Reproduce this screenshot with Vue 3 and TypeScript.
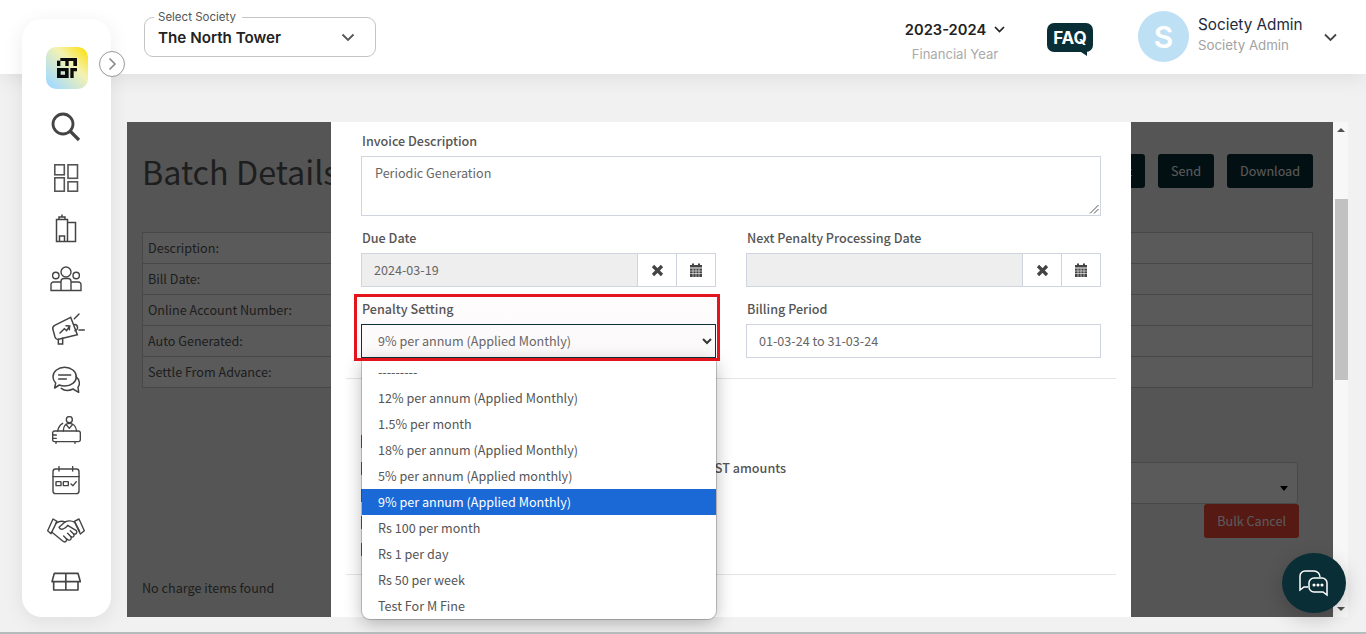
<script setup lang="ts">
const rows = ['Description:', 'Bill Date:', 'Online Account Number:', 'Auto Generated:', 'Settle From Advance:']
const options = [
  '---------',
  '12% per annum (Applied Monthly)',
  '1.5% per month',
  '18% per annum (Applied Monthly)',
  '5% per annum (Applied monthly)',
  '9% per annum (Applied Monthly)',
  'Rs 100 per month',
  'Rs 1 per day',
  'Rs 50 per week',
  'Test For M Fine'
]
const selected = '9% per annum (Applied Monthly)'
</script>

<template>
  <div class="page">
    <header class="topbar">
      <div class="society">
        <span class="society-legend">Select Society</span>
        <span class="society-name">The North Tower</span>
        <svg class="society-chev" width="14" height="9" viewBox="0 0 14 9"><path d="M1.500 1.500 7 7l5.500-5.500" fill="none" stroke="#555" stroke-width="1.800"/></svg>
      </div>
      <div class="year">
        <div class="year-line">
          <span class="year-text">2023-2024</span>
          <svg width="11" height="7" viewBox="0 0 11 7"><path d="M1 1l4.500 4.500L10 1" fill="none" stroke="#222" stroke-width="1.700"/></svg>
        </div>
        <div class="year-label">Financial Year</div>
      </div>
      <div class="faq">
        <span class="faq-text">FAQ</span>
        <svg class="faq-tail" width="9" height="6" viewBox="0 0 9 6"><path d="M0 0h9v6z" fill="#0a2e36"/></svg>
      </div>
      <div class="avatar">S</div>
      <div class="user">
        <div class="user-name">Society Admin</div>
        <div class="user-role">Society Admin</div>
      </div>
      <svg class="user-chev" width="13" height="9" viewBox="0 0 13 9"><path d="M1 1.500l5.500 5.500L12 1.500" fill="none" stroke="#444" stroke-width="1.800"/></svg>
    </header>

    <aside class="sidebar">
      <div class="logo">
        <svg width="20" height="20" viewBox="170 175 60 60" fill="#0c0c0c">
          <rect x="180" y="175" width="50" height="9"/>
          <rect x="170" y="183" width="10" height="16"/>
          <rect x="195" y="183" width="10" height="16"/>
          <rect x="219" y="183" width="11" height="16"/>
          <path fill-rule="evenodd" d="M170 205h35v30h-35zM181 215v10h13v-10z"/>
          <path d="M210 205h20v10h-10v20h-10z"/>
        </svg>
      </div>
      <div class="nav-list">
        <div class="slot">
          <svg class="shift-left" width="30" height="30" viewBox="0 0 30 30" fill="none" stroke="#444">
            <circle cx="12" cy="12" r="10" stroke-width="2.800"/>
            <path d="M19.500 19.500l8.500 8.500" stroke-width="3.200"/>
          </svg>
        </div>
        <div class="slot">
          <svg class="shift-left-1" width="26" height="29" viewBox="0 0 26 29" fill="none" stroke="#555" stroke-width="1.600">
            <rect x="1.800" y="1.800" width="9.500" height="10"/>
            <rect x="15" y="1.800" width="9.500" height="13.500"/>
            <rect x="1.800" y="14.800" width="9.500" height="13.400"/>
            <rect x="15" y="18.800" width="9.500" height="9.400"/>
          </svg>
        </div>
        <div class="slot">
          <svg class="shift-left" width="22" height="29" viewBox="0 0 22 29" fill="none" stroke="#444" stroke-width="1.500">
            <path d="M1.500 27.500V5.500h11v22zM12.500 8.500h8v19H1.500"/>
            <path d="M4 5.500V3h6v2.500M7 3V.5M4.500 27.500v-5.500h5v5.500"/>
          </svg>
        </div>
        <div class="slot">
          <svg class="shift-left-1" width="32" height="26" viewBox="0 0 32 26" fill="none" stroke="#444" stroke-width="1.400">
            <circle cx="16" cy="6" r="5"/>
            <circle cx="5.800" cy="9.500" r="3.200"/>
            <circle cx="26.200" cy="9.500" r="3.200"/>
            <path d="M1 24.500v-6a2.500 2.500 0 0 1 2.500-2.500h7.500v8.500zM11 24.500v-9a3 3 0 0 1 3-3h4a3 3 0 0 1 3 3v9zM21 16h7.500a2.500 2.500 0 0 1 2.500 2.500v6H1"/>
          </svg>
        </div>
        <div class="slot">
          <svg class="shift-right" width="36" height="32" viewBox="60 25 108 96" fill="none" stroke="#444" stroke-width="4.500" stroke-linecap="round">
            <path d="M122 38L74 62q-8 5-5 13l6 22q3 9 11 7l56-14z"/>
            <path d="M85 104v14h13v-18"/>
            <path d="M90 85l13-13 7 6 8-13M108 63l11 1-1 11"/>
            <path d="M132 60a9 9 0 0 1 3 18M133 42l14-14M147 76h16"/>
          </svg>
        </div>
        <div class="slot">
          <svg class="shift-left-1" width="28" height="27" viewBox="62 183 84 81" fill="none" stroke="#444" stroke-width="4.500" stroke-linecap="round" stroke-linejoin="round">
            <path d="M100 187c19 0 35 12 35 28s-16 28-35 28c-6 0-11-1-16-3l-14 9 3-15c-5-5-8-12-8-19 0-16 16-28 35-28z"/>
            <path d="M82 210h36M82 222h23"/>
            <path d="M134 215c11 9 13 24 6 31l2 16-17-10c-14 7-27 5-35-2"/>
          </svg>
        </div>
        <div class="slot">
          <svg class="shift-left-1" width="29" height="28" viewBox="63 333 87 84" fill="none" stroke="#444" stroke-width="4.200" stroke-linecap="round" stroke-linejoin="round">
            <circle cx="115" cy="344" r="9"/>
            <path d="M97 378c0-15 8-23 18-23s20 8 22 23M105 358l10 12 10-12M80 378c2-13 10-20 15-23"/>
            <rect x="65" y="378" width="83" height="32" rx="6"/>
            <path d="M65 390h11M65 400h11M75 410v5M132 410v5"/>
          </svg>
        </div>
        <div class="slot">
          <svg class="shift-left-1" width="28" height="29" viewBox="63 33 84 87" fill="none" stroke="#444" stroke-width="4.200" stroke-linecap="round" stroke-linejoin="round">
            <rect x="66" y="42" width="78" height="74" rx="8"/>
            <path d="M66 65h78M84 35v13M125 35v13"/>
            <rect x="75" y="80" width="15" height="12" rx="1.500"/>
            <rect x="97" y="80" width="15" height="12" rx="1.500"/>
            <path d="M120 87l6 5 10-12"/>
          </svg>
        </div>
        <div class="slot">
          <svg class="shift-left-1" width="38" height="26" viewBox="50 190 114 78" fill="none" stroke="#444" stroke-width="4.200" stroke-linecap="round" stroke-linejoin="round">
            <path d="M52 228l16-35 12 7-18 37zM162 228l-16-35-14 7 18 38z"/>
            <path d="M64 232l34 28c6 5 14-2 10-8l6 4c6 2 11-4 8-10 6 4 12-2 8-8 7 2 12-5 8-10l-26-16c-8 12-22 16-26 6l18-16c8-4 20-4 30 1l14 27"/>
            <path d="M104 202c-9-4-19-2-28 4M108 252l-8-8M122 246l-10-10M130 238l-10-10"/>
          </svg>
        </div>
        <div class="slot">
          <svg class="shift-left-1" width="30" height="20" viewBox="62 347 90 58" fill="none" stroke="#444" stroke-width="4.800" stroke-linejoin="round">
            <path d="M65 375l7-25h71l7 25zM70 375v25h73v-25M106.500 350v50"/>
          </svg>
        </div>
      </div>
      <button class="collapse" type="button" aria-label="Expand">
        <svg width="9" height="14" viewBox="0 0 9 14"><path d="M1.500 1.500 7 7l-5.500 5.500" fill="none" stroke="#888" stroke-width="1.600"/></svg>
      </button>
    </aside>

    <main class="content">
      <section class="panel">
        <div class="batch">
          <div class="batch-head">
            <h1 class="batch-title">Batch Details</h1>
            <div class="batch-actions">
              <button class="btn" type="button">Edit</button>
              <button class="btn" type="button">Send</button>
              <button class="btn" type="button">Download</button>
            </div>
          </div>
          <div class="batch-table">
            <div v-for="r in rows" :key="r" class="batch-row">{{ r }}</div>
          </div>
          <div class="batch-select"><i class="caret"></i></div>
          <div class="cancel-line"><button class="btn btn-red" type="button">Bulk Cancel</button></div>
          <p class="no-items">No charge items found</p>
        </div>

        <div class="backdrop"></div>

        <div class="modal">
          <div class="field-full">
            <label class="lab">Invoice Description</label>
            <div class="textarea">Periodic Generation
              <svg class="grip" width="10" height="10" viewBox="0 0 10 10"><path d="M9.500 1 1 9.500M9.500 5 5 9.500" stroke="#555" stroke-width="1"/></svg>
            </div>
          </div>
          <div class="grid">
            <div>
              <label class="lab">Due Date</label>
              <div class="group">
                <div class="input disabled">2024-03-19</div>
                <span class="addon"><svg width="13" height="13" viewBox="0 0 13 13"><path d="M2 2l9 9M11 2l-9 9" stroke="#444" stroke-width="3.200"/></svg></span>
                <span class="addon"><svg width="14" height="14" viewBox="0 0 14 14"><path d="M1 2h12v2.500H1zM3 .5h2V2H3zM9 .5h2V2H9z" fill="#444"/><path d="M1 5.500h12V14H1z" fill="#444"/><path d="M1 8h12M1 10.500h12M4 5.500V14M7 5.500V14M10 5.500V14" stroke="#fff" stroke-width=".6"/></svg></span>
              </div>
            </div>
            <div>
              <label class="lab">Next Penalty Processing Date</label>
              <div class="group">
                <div class="input disabled"></div>
                <span class="addon"><svg width="13" height="13" viewBox="0 0 13 13"><path d="M2 2l9 9M11 2l-9 9" stroke="#444" stroke-width="3.200"/></svg></span>
                <span class="addon"><svg width="14" height="14" viewBox="0 0 14 14"><path d="M1 2h12v2.500H1zM3 .5h2V2H3zM9 .5h2V2H9z" fill="#444"/><path d="M1 5.500h12V14H1z" fill="#444"/><path d="M1 8h12M1 10.500h12M4 5.500V14M7 5.500V14M10 5.500V14" stroke="#fff" stroke-width=".6"/></svg></span>
              </div>
            </div>
            <div class="penalty">
              <label class="lab">Penalty Setting</label>
              <div class="select">
                {{ selected }}
                <svg class="select-chev" width="10" height="7" viewBox="0 0 10 7"><path d="M1 1l4 4 4-4" fill="none" stroke="#333" stroke-width="2"/></svg>
              </div>
              <div class="highlight"></div>
              <ul class="menu">
                <li v-for="o in options" :key="o" :class="{ active: o === selected }">{{ o }}</li>
              </ul>
            </div>
            <div>
              <label class="lab">Billing Period</label>
              <div class="input">01-03-24 to 31-03-24</div>
            </div>
          </div>
          <hr class="rule" />
          <div class="checks">
            <div class="check-row"><i class="box"></i></div>
            <div class="check-row"><i class="box"></i><span class="check-label">GST amounts</span></div>
            <div class="check-row"><i class="box"></i></div>
            <div class="check-row"><i class="box"></i></div>
            <div class="check-row"><i class="box"></i></div>
          </div>
          <hr class="rule rule-low" />
        </div>
      </section>
      <div class="scrollbar">
        <i class="arrow-up"></i>
        <div class="thumb"></div>
        <i class="arrow-down"></i>
      </div>
    </main>

    <button class="chat" type="button" aria-label="Chat">
      <svg width="30" height="28" viewBox="0 0 30 28" fill="none" stroke="#fff" stroke-width="1.500">
        <path d="M9 18H5l-4 3V7a5 5 0 0 1 5-5h9a6 6 0 0 1 6 6"/>
        <path d="M15 9h8a5 5 0 0 1 5 5v12l-4-3h-9a5 5 0 0 1-5-5v-4a5 5 0 0 1 5-5z"/>
        <circle cx="15" cy="16" r=".8" fill="#fff"/><circle cx="19" cy="16" r=".8" fill="#fff"/><circle cx="23" cy="16" r=".8" fill="#fff"/>
      </svg>
    </button>
  </div>
</template>

<style>
html, body { margin: 0; padding: 0; }
</style>

<style scoped>
* { box-sizing: border-box; }
.page {
  position: relative;
  width: 1366px;
  height: 634px;
  overflow: hidden;
  background: #f1f1f1;
  border-bottom: 2px solid #b4bcbc;
  font-family: "Noto Sans CJK SC", "Noto Sans", sans-serif;
}
.topbar {
  height: 74px;
  background: #fff;
  box-shadow: 0 4px 20px rgba(0, 0, 0, .08);
  display: flex;
  align-items: flex-start;
  padding-left: 144px;
  font-family: Inter, "Liberation Sans", sans-serif;
  position: relative;
}
.society {
  position: relative;
  margin-top: 17px;
  width: 232px;
  height: 40px;
  border: 1px solid #c4c4c4;
  border-radius: 9px;
  display: flex;
  align-items: center;
  padding: 0 13px;
}
.society-legend {
  position: absolute;
  left: 9px;
  top: -7px;
  padding: 0 6px 0 4px;
  background: #fff;
  font-size: 11.500px;
  line-height: 13px;
  color: #555;
}
.society-name { font-size: 15.200px; font-weight: 600; color: #222; }
.society-chev { margin-left: auto; margin-right: 7px; }
.year { margin-left: 524px; margin-top: 20px; width: 110px; text-align: center; }
.year-line { display: flex; align-items: center; justify-content: center; gap: 8px; height: 19px; }
.year-text { font-size: 14.700px; font-weight: 600; color: #222; }
.year-label { margin-top: 7px; font-size: 13.100px; color: #aaa; }
.faq {
  position: relative;
  margin-left: 37px;
  margin-top: 23px;
  width: 46px;
  height: 29px;
  background: #0a2e36;
  border-radius: 7px;
  display: flex;
  align-items: center;
  justify-content: center;
}
.faq-text { color: #fff; font-size: 17px; font-weight: 700; }
.faq-tail { position: absolute; right: 6px; bottom: -4px; }
.avatar {
  margin-left: 45px;
  margin-top: 11px;
  width: 51px;
  height: 51px;
  border-radius: 50%;
  background: #bde0f5;
  color: #fff;
  font-size: 30px;
  font-weight: 600;
  display: flex;
  align-items: center;
  justify-content: center;
}
.user { margin-left: 9px; margin-top: 15px; width: 126px; }
.user-name { font-size: 15.300px; color: #1e2a3c; line-height: 19px; }
.user-role { font-size: 13.300px; color: #a2a2a2; line-height: 18px; margin-top: 2px; }
.user-chev { margin-top: 33px; }

.sidebar {
  position: absolute;
  left: 22px;
  top: 19px;
  width: 89px;
  height: 598px;
  background: #fff;
  border-radius: 20px;
  box-shadow: 0 4px 20px rgba(0, 0, 0, .08);
  display: flex;
  flex-direction: column;
  align-items: center;
  padding-top: 28px;
  z-index: 3;
}
.logo {
  width: 42px;
  height: 42px;
  border-radius: 10px;
  background: linear-gradient(45deg, #a8dcfb 12%, #f4f2b0 62%, #fbe012 95%);
  display: flex;
  align-items: center;
  justify-content: center;
}
.nav-list { margin-top: 13px; display: flex; flex-direction: column; width: 100%; }
.slot { height: 50.500px; display: flex; align-items: center; justify-content: center; }
.shift-left { margin-right: 2px; }
.shift-left-1 { margin-right: 1px; }
.shift-right { margin-left: 3px; }
.collapse {
  position: absolute;
  left: 77px;
  top: 32px;
  width: 26px;
  height: 26px;
  border: 1px solid #999;
  border-radius: 50%;
  background: #fff;
  display: flex;
  align-items: center;
  justify-content: center;
  padding: 0;
}

.content { margin-left: 127px; margin-top: 48px; display: flex; width: 1221px; height: 495px; }
.panel { position: relative; width: 1206px; height: 495px; background: #f1f1f1; }
.batch { padding: 0 20px 0 15px; height: 100%; display: flex; flex-direction: column; color: #555; overflow: hidden; }
.batch-head { display: flex; justify-content: space-between; align-items: flex-start; height: 110px; padding-top: 32px; flex: none; }
.batch-title { margin: 0; font-size: 32.300px; font-weight: 400; color: #555; line-height: 34px; }
.batch-actions { display: flex; gap: 13px; }
.btn {
  border: 0;
  border-radius: 3px;
  height: 34px;
  padding: 0 13px 2px;
  background: #0a2e36;
  color: #fff;
  font: 12.600px "Noto Sans CJK SC", "Noto Sans", sans-serif;
}
.btn-red { background: #f34938; }
.batch-table { border: 1px solid #ccc; border-bottom: 0; background: #fff; flex: none; }
.batch-row {
  height: 31px;
  padding-left: 5px;
  border-bottom: 1px solid #ccc;
  font-size: 12.600px;
  line-height: 30px;
}
.batch-select {
  position: relative;
  flex: none;
  margin-top: 74px;
  margin-left: 700px;
  height: 42px;
  border: 1px solid #ccc;
  border-radius: 4px;
  margin-right: 15px;
  background: #fff;
}
.caret {
  position: absolute;
  right: 9px;
  top: 23px;
  border: 4px solid transparent;
  border-top: 5px solid #000;
  border-bottom: 0;
}
.cancel-line { display: flex; justify-content: flex-end; margin-right: 14px; flex: none; }
.no-items { margin: 40px 0 0; font-size: 12.600px; line-height: 20px; }
.backdrop { position: absolute; inset: 0; background: rgba(0, 0, 0, .647); }

.modal {
  position: absolute;
  left: 204px;
  top: 0;
  width: 800px;
  height: 495px;
  background: #fff;
  padding: 10px 30px 0;
  color: #555;
  font-size: 12.600px;
}
.lab { display: block; font-size: 12.600px; font-weight: 500; color: #555; line-height: 18px; margin-bottom: 6px; padding-left: 1px; }
.textarea {
  position: relative;
  height: 60px;
  border: 1px solid #d0d4e0;
  padding: 7px 13px;
  line-height: 18px;
  color: #666;
  font-size: 12.600px;
}
.grip { position: absolute; right: 1px; bottom: 1px; }
.grid { display: grid; grid-template-columns: 355px 355px; column-gap: 30px; row-gap: 13px; margin-top: 13px; }
.group { display: flex; height: 34px; }
.input {
  flex: 1;
  height: 34px;
  border: 1px solid #d0d4e0;
  padding: 0 12px;
  line-height: 32px;
  font-size: 12.600px;
  color: #666;
}
.disabled { background: #eee; }
.addon {
  width: 39px;
  height: 34px;
  border: 1px solid #d0d4e0;
  border-left: 0;
  display: flex;
  align-items: center;
  justify-content: center;
}
.penalty { position: relative; }
.select {
  position: relative;
  height: 34px;
  border: 1px solid #0a2e36;
  padding-left: 16px;
  line-height: 32px;
  font-size: 12.600px;
  color: #666;
}
.select-chev { position: absolute; right: 3px; top: 13px; }
.highlight {
  position: absolute;
  left: -7px;
  right: -4px;
  top: -6px;
  bottom: -3px;
  border: 3px solid #e3141c;
  pointer-events: none;
  background: linear-gradient(rgba(200, 100, 120, .02), rgba(160, 100, 120, .04));
  z-index: 4;
}
.menu {
  position: absolute;
  left: 1px;
  top: 59px;
  width: 354px;
  height: 260px;
  margin: 0;
  padding: 0;
  list-style: none;
  background: #fff;
  border-radius: 0 0 8px 8px;
  box-shadow: 0 0 0 1px rgba(0, 0, 0, .2), 0 4px 18px rgba(0, 0, 0, .28);
  overflow: hidden;
  z-index: 3;
}
.menu li { height: 26px; line-height: 25px; padding-left: 16px; font-size: 12.600px; color: #555; }
.menu li.active { background: #1a69d6; color: #fff; }
.rule { border: 0; border-top: 1px solid #e5e5e5; margin: 20px -15px 0; }
.checks { padding-top: 49px; }
.check-row { display: flex; align-items: center; height: 27px; }
.check-label { font-weight: 500; font-size: 12.600px; margin-left: 332px; line-height: 17px; margin-bottom: 2px; }
.box { width: 13px; height: 13px; background: #666; flex: none; }
.rule-low { margin-top: 11px; }

.scrollbar { position: relative; width: 15px; background: #f7f7f7; }
.thumb { position: absolute; left: 2px; right: 0; top: 77px; height: 181px; background: #c1c1c1; }
.arrow-up, .arrow-down { position: absolute; left: 4px; border: 4px solid transparent; }
.arrow-up { top: 6px; border-bottom: 4px solid #505050; border-top: 0; }
.arrow-down { bottom: 6px; border-top: 4px solid #505050; border-bottom: 0; }

.chat {
  position: absolute;
  left: 1282px;
  top: 553px;
  width: 64px;
  height: 60px;
  border: 0;
  border-radius: 50%;
  background: #0a2e36;
  box-shadow: 0 6px 20px rgba(0, 0, 0, .2);
  display: flex;
  align-items: center;
  justify-content: center;
  padding: 0;
  z-index: 5;
}
</style>
